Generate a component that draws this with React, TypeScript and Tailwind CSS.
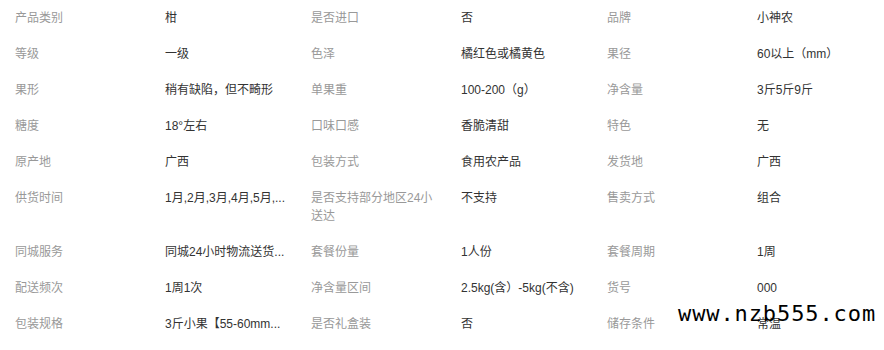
const rows = [
  [
    ['产品类别', '柑'],
    ['是否进口', '否'],
    ['品牌', '小神农'],
  ],
  [
    ['等级', '一级'],
    ['色泽', '橘红色或橘黄色'],
    ['果径', '60以上（mm）'],
  ],
  [
    ['果形', '稍有缺陷，但不畸形'],
    ['单果重', '100-200（g）'],
    ['净含量', '3斤5斤9斤'],
  ],
  [
    ['糖度', '18°左右'],
    ['口味口感', '香脆清甜'],
    ['特色', '无'],
  ],
  [
    ['原产地', '广西'],
    ['包装方式', '食用农产品'],
    ['发货地', '广西'],
  ],
  [
    ['供货时间', '1月,2月,3月,4月,5月,...'],
    ['是否支持部分地区24小送达', '不支持'],
    ['售卖方式', '组合'],
  ],
  [
    ['同城服务', '同城24小时物流送货...'],
    ['套餐份量', '1人份'],
    ['套餐周期', '1周'],
  ],
  [
    ['配送频次', '1周1次'],
    ['净含量区间', '2.5kg(含）-5kg(不含)'],
    ['货号', '000'],
  ],
  [
    ['包装规格', '3斤小果【55-60mm...'],
    ['是否礼盒装', '否'],
    ['储存条件', '常温'],
  ],
]

const App = () => {
  return (
    <div className="relative w-[884px] h-[350px] bg-white overflow-hidden text-[12px] leading-[18px] font-['Liberation_Sans','Noto_Sans_CJK_SC',sans-serif]">
      <div className="grid grid-cols-[296px_296px_292px]">
        {rows.map((row, i) =>
          row.map(([label, value], j) => (
            <div key={i + '-' + j} className="flex py-[9px] pl-[15px]">
              <div className="w-[150px] shrink-0 pr-[25px] text-[#999]">{label}</div>
              <div className="text-[#333] whitespace-nowrap">{value}</div>
            </div>
          ))
        )}
      </div>
      {/* watermark */}
      <div className="absolute left-[678px] top-[302px] text-[22px] leading-[24px] tracking-[0.9px] text-black font-['DejaVu_Sans_Mono',monospace]">
        www.nzb555.com
      </div>
    </div>
  )
}

export default App
